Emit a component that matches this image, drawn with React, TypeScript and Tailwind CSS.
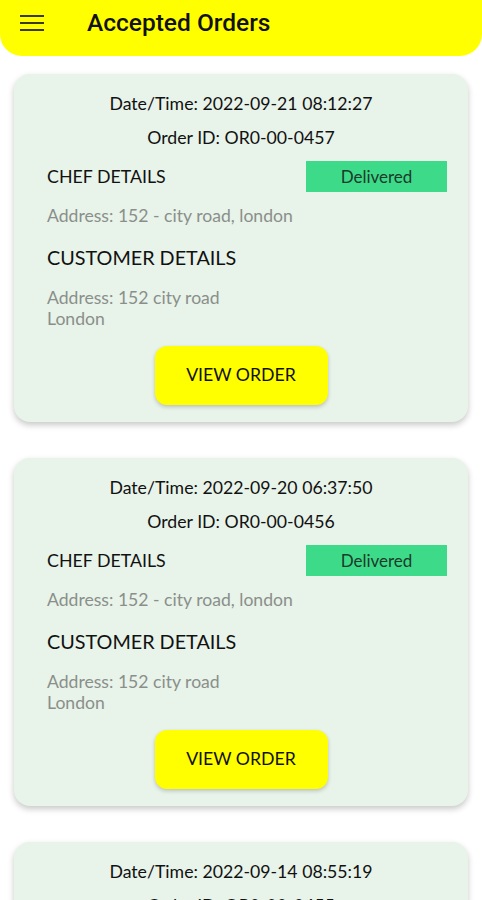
const orders = [
  { date: "2022-09-21 08:12:27", id: "OR0-00-0457" },
  { date: "2022-09-20 06:37:50", id: "OR0-00-0456" },
  { date: "2022-09-14 08:55:19", id: "OR0-00-0455" },
];

function OrderCard({ date, id }: { date: string; id: string }) {
  return (
    <div className="bg-[#e8f3e9] rounded-[16px] shadow-[0_3px_6px_rgba(0,0,0,0.22)] pt-[18px] pb-[17px] text-[#111]">
      <div className="text-center text-[17.7px] leading-[24px]">Date/Time: {date}</div>
      <div className="text-center text-[17.7px] leading-[24px] mt-[10px]">Order ID: {id}</div>
      <div className="pl-[33px] pr-[21px]">
        <div className="flex items-center justify-between mt-[11px]">
          <div className="text-[17.8px]">CHEF DETAILS</div>
          <div className="w-[141px] h-[31px] bg-[#3ddb89] flex items-center justify-center text-[17px] text-[#1a3a2a]">
            Delivered
          </div>
        </div>
        <div className="text-[17.6px] text-[#8a8f8b] mt-[13px] leading-[22px]">Address: 152 - city road, london</div>
        <div className="text-[19.8px] mt-[18px] leading-[24px]">CUSTOMER DETAILS</div>
        <div className="text-[17.6px] text-[#8a8f8b] mt-[18px] leading-[21px]">
          Address: 152 city road
          <br />
          London
        </div>
        <div className="flex justify-center mt-[17px] pr-[12px]">
          <button className="w-[173px] h-[59px] bg-[#ffff00] rounded-[12px] shadow-[0_2px_4px_rgba(0,0,0,0.2)] text-[17.7px] text-[#111]">
            VIEW ORDER
          </button>
        </div>
      </div>
    </div>
  );
}

export default function App() {
  return (
    <div className="min-h-screen bg-white" style={{ fontFamily: "Lato, 'Open Sans', sans-serif" }}>
      <header className="h-[56px] bg-[#ffff00] rounded-b-[22px] flex items-center pb-[10px]">
        <svg className="ml-[20px] w-[24px] h-[18px]" viewBox="0 0 24 18">
          <rect x="0" y="1" width="24" height="2" fill="#3a3a1a" />
          <rect x="0" y="8" width="24" height="2" fill="#3a3a1a" />
          <rect x="0" y="15" width="24" height="2" fill="#3a3a1a" />
        </svg>
        <h1 className="ml-[43px] text-[24.5px] font-medium text-[#111]" style={{ fontFamily: "Roboto, sans-serif" }}>
          Accepted Orders
        </h1>
      </header>
      <div className="flex flex-col gap-[36px] pt-[18px] px-[14px] pb-[20px]">
        {orders.map((o) => (
          <OrderCard key={o.id} date={o.date} id={o.id} />
        ))}
      </div>
    </div>
  );
}
